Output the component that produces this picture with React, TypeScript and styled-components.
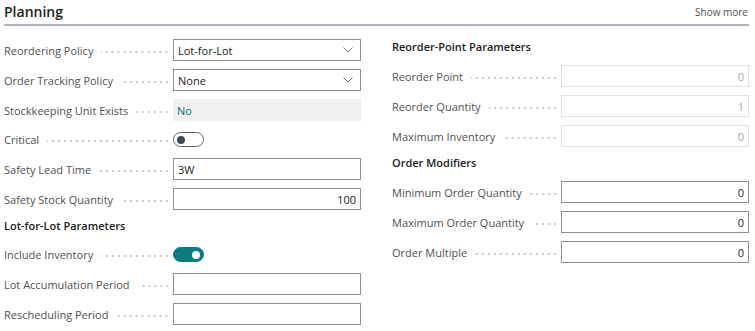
import styled, { createGlobalStyle, css } from "styled-components"

const GlobalStyle = createGlobalStyle`
    body {
        margin: 0;
        background: #ffffff;
        font-family: "Open Sans", "Noto Sans", sans-serif;
        color: #212121;
    }
`

export const Page = styled.div`
    width: 755px;
    box-sizing: border-box;
    padding: 0 6px 0 4px;
`
export const Header = styled.div`
    display: flex;
    align-items: center;
    justify-content: space-between;
    height: 24px;
    border-bottom: 2px solid #adb2bb;
`
export const Title = styled.h2`
    margin: 0;
    font-size: 14px;
    font-weight: 600;
    color: #212121;
    line-height: 24px;
`
export const ShowMore = styled.span`
    font-size: 10px;
    color: #505050;
    padding-right: 1px;
`
export const Columns = styled.div`
    display: grid;
    grid-template-columns: 357px 357px;
    column-gap: 31px;
    margin-top: 13px;
`
export const Column = styled.div`
    display: flex;
    flex-direction: column;
    gap: 8px;
`
export const SectionTitle = styled.div`
    height: 18px;
    box-sizing: border-box;
    padding-top: 1px;
    line-height: 14px;
    font-size: 11px;
    font-weight: 600;
    color: #212121;
`
export const Row = styled.div<{ $short?: boolean }>`
    display: grid;
    grid-template-columns: 169px 188px;
    height: ${(p) => (p.$short ? "21px" : "22px")};
    align-items: center;
`
export const Label = styled.div`
    display: flex;
    align-items: center;
    font-size: 11px;
    color: #505050;
    white-space: nowrap;
    padding-right: 3px;
`
export const Leader = styled.span`
    flex: 1;
    height: 6px;
    margin: 3px 0 0 8px;
    background-image: radial-gradient(circle, #c9c9c9 0.7px, transparent 1.1px);
    background-size: 6px 6px;
    background-repeat: repeat-x;
    background-position: right center;
`
const boxBase = css`
    height: 22px;
    box-sizing: border-box;
    display: flex;
    align-items: center;
    padding: 0 4px;
    font-size: 11px;
`
export const Box = styled.div<{ $align?: "left" | "right"; $readonly?: boolean }>`
    ${boxBase}
    justify-content: ${(p) => (p.$align === "right" ? "flex-end" : "space-between")};
    border: 1px solid ${(p) => (p.$readonly ? "#e1e1e1" : "#8f8f8f")};
    color: ${(p) => (p.$readonly ? "#a6a6a6" : "#212121")};
    background: #ffffff;
`
export const StaticValue = styled.div`
    ${boxBase}
    background: #f0f0f0;
    color: #00707a;
`
export const Chevron = styled.svg`
    width: 10px;
    height: 6px;
    margin-right: 3px;
`
export const Toggle = styled.div<{ $on?: boolean }>`
    width: 31px;
    height: 15px;
    box-sizing: border-box;
    border-radius: 8px;
    display: flex;
    align-items: center;
    padding: 0 3px;
    justify-content: ${(p) => (p.$on ? "flex-end" : "flex-start")};
    border: 1px solid ${(p) => (p.$on ? "#0f7b80" : "#5a6270")};
    background: ${(p) => (p.$on ? "#0f7b80" : "#ffffff")};
    &::after {
        content: "";
        width: 8px;
        height: 8px;
        border-radius: 50%;
        background: ${(p) => (p.$on ? "#ffffff" : "#3f4756")};
    }
`

type Field =
    | { kind: "select"; label: string; value: string }
    | { kind: "text"; label: string; value: string }
    | { kind: "number"; label: string; value: string; readonly?: boolean }
    | { kind: "static"; label: string; value: string }
    | { kind: "toggle"; label: string; on: boolean }
    | { kind: "section"; label: string }

const leftFields: Field[] = [
    { kind: "select", label: "Reordering Policy", value: "Lot-for-Lot" },
    { kind: "select", label: "Order Tracking Policy", value: "None" },
    { kind: "static", label: "Stockkeeping Unit Exists", value: "No" },
    { kind: "toggle", label: "Critical", on: false },
    { kind: "text", label: "Safety Lead Time", value: "3W" },
    { kind: "number", label: "Safety Stock Quantity", value: "100" },
    { kind: "section", label: "Lot-for-Lot Parameters" },
    { kind: "toggle", label: "Include Inventory", on: true },
    { kind: "text", label: "Lot Accumulation Period", value: "" },
    { kind: "text", label: "Rescheduling Period", value: "" },
]

const rightFields: Field[] = [
    { kind: "section", label: "Reorder-Point Parameters" },
    { kind: "number", label: "Reorder Point", value: "0", readonly: true },
    { kind: "number", label: "Reorder Quantity", value: "1", readonly: true },
    { kind: "number", label: "Maximum Inventory", value: "0", readonly: true },
    { kind: "section", label: "Order Modifiers" },
    { kind: "number", label: "Minimum Order Quantity", value: "0" },
    { kind: "number", label: "Maximum Order Quantity", value: "0" },
    { kind: "number", label: "Order Multiple", value: "0" },
]

const FieldRow = ({ field }: { field: Field }) => {
    if (field.kind === "section") return <SectionTitle>{field.label}</SectionTitle>

    let control
    switch (field.kind) {
        case "select":
            control = (
                <Box>
                    <span>{field.value}</span>
                    <Chevron viewBox="0 0 10 6">
                        <path d="M0.5 0.5 L5 5 L9.5 0.5" fill="none" stroke="#7a7a7a" strokeWidth="1" />
                    </Chevron>
                </Box>
            )
            break
        case "text":
            control = <Box>{field.value}</Box>
            break
        case "number":
            control = (
                <Box $align="right" $readonly={field.readonly}>
                    {field.value}
                </Box>
            )
            break
        case "static":
            control = <StaticValue>{field.value}</StaticValue>
            break
        case "toggle":
            control = <Toggle $on={field.on} />
            break
    }

    return (
        <Row $short={field.kind === "toggle"}>
            <Label>
                {field.label}
                <Leader />
            </Label>
            {control}
        </Row>
    )
}

const App = () => {
    return (
        <>
            <GlobalStyle />
            <Page>
                <Header>
                    <Title>Planning</Title>
                    <ShowMore>Show more</ShowMore>
                </Header>
                <Columns>
                    <Column>
                        {leftFields.map((f) => (
                            <FieldRow key={f.label} field={f} />
                        ))}
                    </Column>
                    <Column>
                        {rightFields.map((f) => (
                            <FieldRow key={f.label} field={f} />
                        ))}
                    </Column>
                </Columns>
            </Page>
        </>
    )
}

export default App
